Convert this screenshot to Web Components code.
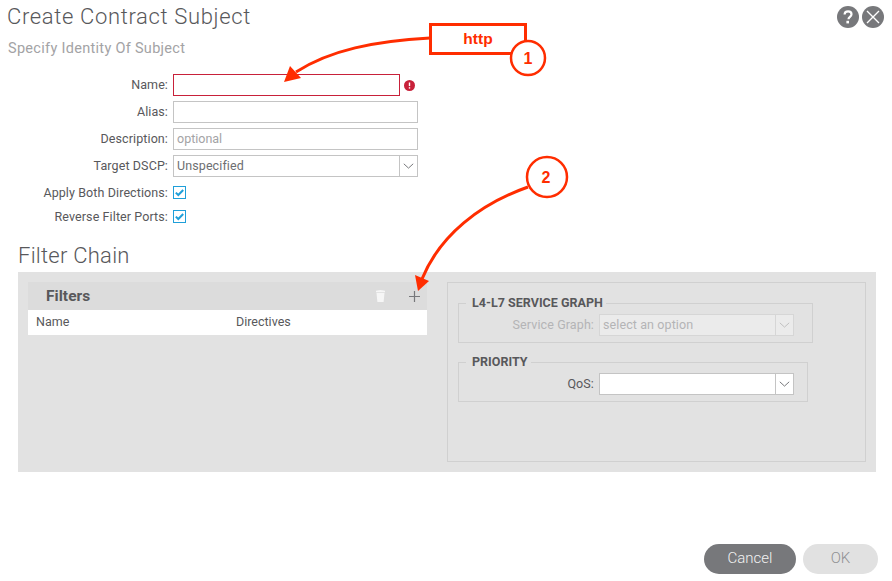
<!DOCTYPE html>
<html>
<head>
<meta charset="utf-8">
<title>Create Contract Subject</title>
<style>
  html, body { margin: 0; background: #fff; }
  body { font-family: Roboto, "Liberation Sans", sans-serif; color: #58585b; }
</style>
</head>
<body>
<contract-dialog>
  <dialog-header slot="header" title-text="Create Contract Subject" subtitle="Specify Identity Of Subject"></dialog-header>
  <identity-form slot="form"></identity-form>
  <filter-chain slot="chain"></filter-chain>
  <pill-button slot="footer" kind="dark" style="--w:92px">Cancel</pill-button>
  <pill-button slot="footer" kind="light" style="--w:75px">OK</pill-button>
  <callout-layer slot="overlay"></callout-layer>
</contract-dialog>

<script>
// Outer page box, sections are stacked by flow
class ContractDialog extends HTMLElement {
    constructor() {
        super();
        this.attachShadow({ mode: 'open' });
        this.shadowRoot.innerHTML = `
        <style>
          :host { display: flex; flex-direction: column; position: relative; width: 892px; height: 581px; overflow: hidden; }
          .form { display: block; margin-top: 16px; }
          .chain { display: block; margin-top: 14px; }
          .footer { display: flex; justify-content: flex-end; gap: 7px; padding: 72px 14px 0 0; }
        </style>
        <slot name="header"></slot>
        <div class="form"><slot name="form"></slot></div>
        <div class="chain"><slot name="chain"></slot></div>
        <div class="footer"><slot name="footer"></slot></div>
        <slot name="overlay"></slot>
        `;
    }
}
customElements.define('contract-dialog', ContractDialog);

class DialogHeader extends HTMLElement {
    constructor() {
        super();
        this.attachShadow({ mode: 'open' });
    }
    connectedCallback() {
        this.shadowRoot.innerHTML = `
        <style>
          :host { display: flex; justify-content: space-between; height: 58px; padding: 4px 8px 0 7px; box-sizing: border-box; }
          h1 { margin: 0; font: 300 22px/26px Roboto, "Liberation Sans", sans-serif; letter-spacing: .65px; color: #58585b; }
          h2 { margin: 9px 0 0 1px; font: 400 14.5px/20px Roboto, "Liberation Sans", sans-serif; letter-spacing: .3px; color: #a3a3a5; }
          .tools { display: flex; gap: 3px; padding-top: 2px; height: 22px; }
          svg { display: block; }
        </style>
        <div>
          <h1>${this.getAttribute('title-text')}</h1>
          <h2>${this.getAttribute('subtitle')}</h2>
        </div>
        <div class="tools">
          <svg width="22" height="22" viewBox="0 0 22 22"><circle cx="11" cy="11" r="11" fill="#77787b"/><path d="M7.6 8.6c0-2 1.500-3.200 3.500-3.200s3.400 1.100 3.400 2.900c0 2.500-3 2.500-3 4.900" fill="none" stroke="#fff" stroke-width="2.200"/><rect x="9.400" y="14.800" width="2.600" height="2.600" fill="#fff"/></svg>
          <svg width="22" height="22" viewBox="0 0 22 22"><circle cx="11" cy="11" r="11" fill="#77787b"/><path d="M5 5l12 12M17 5L5 17" stroke="#fff" stroke-width="1.400"/></svg>
        </div>
        `;
    }
}
customElements.define('dialog-header', DialogHeader);

class FormRow extends HTMLElement {
    constructor() {
        super();
        this.attachShadow({ mode: 'open' });
    }
    connectedCallback() {
        const labelWidth = this.getAttribute('label-width') || '168px';
        this.shadowRoot.innerHTML = `
        <style>
          :host { display: grid; grid-template-columns: ${labelWidth} 1fr; column-gap: 5px; align-items: center; min-height: 22px; font: 12.5px/22px Roboto, "Liberation Sans", sans-serif; color: var(--label-color, #58585b); }
          label { text-align: right; white-space: nowrap; letter-spacing: .1px; }
          .field { display: flex; align-items: center; }
        </style>
        <label>${this.getAttribute('label')}</label>
        <div class="field"><slot></slot></div>
        `;
    }
}
customElements.define('form-row', FormRow);

class TextBox extends HTMLElement {
    constructor() {
        super();
        this.attachShadow({ mode: 'open' });
    }
    connectedCallback() {
        const invalid = this.hasAttribute('invalid');
        this.shadowRoot.innerHTML = `
        <style>
          :host { display: flex; align-items: center; gap: 4px; }
          .box { box-sizing: border-box; width: ${invalid ? '227px' : '245px'}; height: 22px; padding: 0 3px; background: #fff; border: 1px solid ${invalid ? '#c8213a' : '#c4c4c4'}; font: 12.5px/20px Roboto, "Liberation Sans", sans-serif; color: #a3a3a5; }
          svg { display: block; }
        </style>
        <div class="box">${this.getAttribute('placeholder') || ''}</div>
        ${invalid ? `<svg width="11" height="11" viewBox="0 0 11 11"><circle cx="5.500" cy="5.500" r="5.500" fill="#c8213a"/><path d="M5.500 2.500v3.600" stroke="#fff" stroke-width="1.400"/><rect x="4.800" y="7.200" width="1.400" height="1.400" fill="#fff"/></svg>` : ''}
        `;
    }
}
customElements.define('text-box', TextBox);

class SelectBox extends HTMLElement {
    constructor() {
        super();
        this.attachShadow({ mode: 'open' });
    }
    connectedCallback() {
        const disabled = this.hasAttribute('disabled');
        const line = disabled ? '#d6d6d6' : '#c4c4c4';
        this.shadowRoot.innerHTML = `
        <style>
          :host { display: flex; box-sizing: border-box; width: ${this.getAttribute('width') || '245px'}; height: 22px; background: ${disabled ? '#ebebeb' : '#fff'}; border: 1px solid ${line}; font: 12.5px/20px Roboto, "Liberation Sans", sans-serif; color: ${disabled ? '#b4b4b6' : '#6d6e71'}; }
          .value { flex: 1; padding: 0 3px; letter-spacing: .1px; white-space: nowrap; overflow: hidden; }
          .arrow { flex: 0 0 17px; display: flex; align-items: center; justify-content: center; border-left: 1px solid ${line}; }
        </style>
        <div class="value">${this.getAttribute('value') || ''}</div>
        <div class="arrow">
          <svg width="11" height="6" viewBox="0 0 11 6"><path d="M.8.8l4.700 4.300L10.200.8" fill="none" stroke="${disabled ? '#c0c0c0' : '#77787b'}" stroke-width="1"/></svg>
        </div>
        `;
    }
}
customElements.define('select-box', SelectBox);

class CheckBox extends HTMLElement {
    constructor() {
        super();
        this.attachShadow({ mode: 'open' });
        this.shadowRoot.innerHTML = `
        <style>
          :host { display: block; width: 13px; height: 13px; margin-bottom: 1px; }
          svg { display: block; }
        </style>
        <svg width="13" height="13" viewBox="0 0 13 13"><rect x=".5" y=".5" width="12" height="12" fill="#fff" stroke="#1f9fd9"/><path d="M2.800 6.600l2.500 2.400 4.900-5" fill="none" stroke="#1f9fd9" stroke-width="2"/></svg>
        `;
    }
}
customElements.define('check-box', CheckBox);

class IdentityForm extends HTMLElement {
    constructor() {
        super();
        this.attachShadow({ mode: 'open' });
        this.shadowRoot.innerHTML = `
        <style>
          :host { display: flex; flex-direction: column; gap: 5px; }
          .checks { display: flex; flex-direction: column; gap: 2px; }
        </style>
        <form-row label="Name:"><text-box invalid></text-box></form-row>
        <form-row label="Alias:"><text-box></text-box></form-row>
        <form-row label="Description:"><text-box placeholder="optional"></text-box></form-row>
        <form-row label="Target DSCP:"><select-box value="Unspecified"></select-box></form-row>
        <div class="checks">
          <form-row label="Apply Both Directions:"><check-box></check-box></form-row>
          <form-row label="Reverse Filter Ports:"><check-box></check-box></form-row>
        </div>
        `;
    }
}
customElements.define('identity-form', IdentityForm);

class FilterTable extends HTMLElement {
    constructor() {
        super();
        this.attachShadow({ mode: 'open' });
        this.shadowRoot.innerHTML = `
        <style>
          :host { display: block; }
          .bar { display: flex; align-items: center; height: 28px; padding: 0 7px 0 18px; background: #dcdcdc; }
          .bar b { flex: 1; font: 700 15.5px/28px Roboto, "Liberation Sans", sans-serif; letter-spacing: .05px; color: #58585b; }
          .bar svg { display: block; }
          .trash { margin-right: 24px; }
          .head { display: grid; grid-template-columns: 200px 1fr; height: 25px; padding-left: 8px; background: #fff; font: 12.5px/24px Roboto, "Liberation Sans", sans-serif; color: #58585b; }
        </style>
        <div class="bar">
          <b>Filters</b>
          <svg class="trash" width="9" height="12" viewBox="0 0 9 12"><path d="M0 .8l4.500-.8L9 .8v1.400H0zM.5 3h8L7.600 12H1.400z" fill="#f6f6f6"/></svg>
          <svg width="11" height="11" viewBox="0 0 11 11"><path d="M5.500 0v11M0 5.500h11" stroke="#77787b" stroke-width="1.200"/></svg>
        </div>
        <div class="head"><span>Name</span><span>Directives</span></div>
        `;
    }
}
customElements.define('filter-table', FilterTable);

class FieldGroup extends HTMLElement {
    constructor() {
        super();
        this.attachShadow({ mode: 'open' });
    }
    connectedCallback() {
        this.shadowRoot.innerHTML = `
        <style>
          :host { display: block; width: ${this.getAttribute('width')}; }
          fieldset { margin: 0; padding: 4px 0 6px; border: 1px solid #d0d0d0; }
          legend { margin-left: 7px; padding: 0 3px 0 6px; font: 700 12.5px/14px Roboto, "Liberation Sans", sans-serif; letter-spacing: .02px; color: #58585b; }
        </style>
        <fieldset>
          <legend>${this.getAttribute('legend')}</legend>
          <slot></slot>
        </fieldset>
        `;
    }
}
customElements.define('field-group', FieldGroup);

class FilterChain extends HTMLElement {
    constructor() {
        super();
        this.attachShadow({ mode: 'open' });
        this.shadowRoot.innerHTML = `
        <style>
          :host { display: block; margin: 0 16px 0 18px; }
          h3 { margin: 0 0 2px; font: 300 22px/28px Roboto, "Liberation Sans", sans-serif; letter-spacing: .25px; color: #58585b; }
          .panel { display: grid; grid-template-columns: 399px 419px; column-gap: 20px; height: 200px; box-sizing: border-box; padding: 10px 10px 10px 10px; background: #e2e2e2; }
          .right { box-sizing: border-box; padding: 13px 0 0 10px; border: 1px solid #d0d0d0; }
          .muted { --label-color: #b4b4b6; }
          .second { margin-top: 12px; }
        </style>
        <h3>Filter Chain</h3>
        <div class="panel">
          <filter-table></filter-table>
          <div class="right">
            <field-group legend="L4-L7 SERVICE GRAPH" width="355px">
              <form-row class="muted" label="Service Graph:" label-width="135px"><select-box disabled value="select an option" width="195px"></select-box></form-row>
            </field-group>
            <field-group class="second" legend="PRIORITY" width="350px">
              <form-row label="QoS:" label-width="135px"><select-box width="195px"></select-box></form-row>
            </field-group>
          </div>
        </div>
        `;
    }
}
customElements.define('filter-chain', FilterChain);

class PillButton extends HTMLElement {
    constructor() {
        super();
        this.attachShadow({ mode: 'open' });
    }
    connectedCallback() {
        const dark = this.getAttribute('kind') === 'dark';
        this.shadowRoot.innerHTML = `
        <style>
          :host { display: block; width: var(--w); height: 30px; border-radius: 15px; text-align: center; background: ${dark ? '#77787b' : '#e1e1e1'}; color: ${dark ? '#f2f2f2' : '#8f9093'}; font: 300 15px/29px Roboto, "Liberation Sans", sans-serif; }
        </style>
        <slot></slot>
        `;
    }
}
customElements.define('pill-button', PillButton);

// Red annotations drawn on top of the screenshot
class CalloutLayer extends HTMLElement {
    constructor() {
        super();
        this.attachShadow({ mode: 'open' });
        this.shadowRoot.innerHTML = `
        <style>
          :host { position: absolute; left: 0; top: 0; width: 892px; height: 581px; pointer-events: none; }
          svg { display: block; }
          text { font-family: "Liberation Sans", Arial, sans-serif; font-weight: 700; fill: #ff2d00; text-anchor: middle; }
        </style>
        <svg width="892" height="581" viewBox="0 0 892 581">
          <path d="M430 38C375 41 330 50 296 72" fill="none" stroke="#ff2d00" stroke-width="3"/>
          <path d="M284 82L290 66L301 78Z" fill="#ff2d00"/>
          <rect x="430.500" y="24.500" width="95" height="29" fill="#fff" stroke="#ff2d00" stroke-width="3"/>
          <text x="478" y="44" font-size="15.500">http</text>
          <circle cx="528" cy="58" r="17" fill="#fff" stroke="#ff2d00" stroke-width="2.500"/>
          <text x="528" y="64" font-size="16">1</text>
          <path d="M528 187C480 204 440 235 422 279" fill="none" stroke="#ff2d00" stroke-width="3"/>
          <path d="M418 291L415 275L429 281Z" fill="#ff2d00"/>
          <circle cx="547" cy="177" r="20" fill="#fff" stroke="#ff2d00" stroke-width="2.500"/>
          <text x="546" y="183" font-size="16">2</text>
        </svg>
        `;
    }
}
customElements.define('callout-layer', CalloutLayer);
</script>
</body>
</html>
